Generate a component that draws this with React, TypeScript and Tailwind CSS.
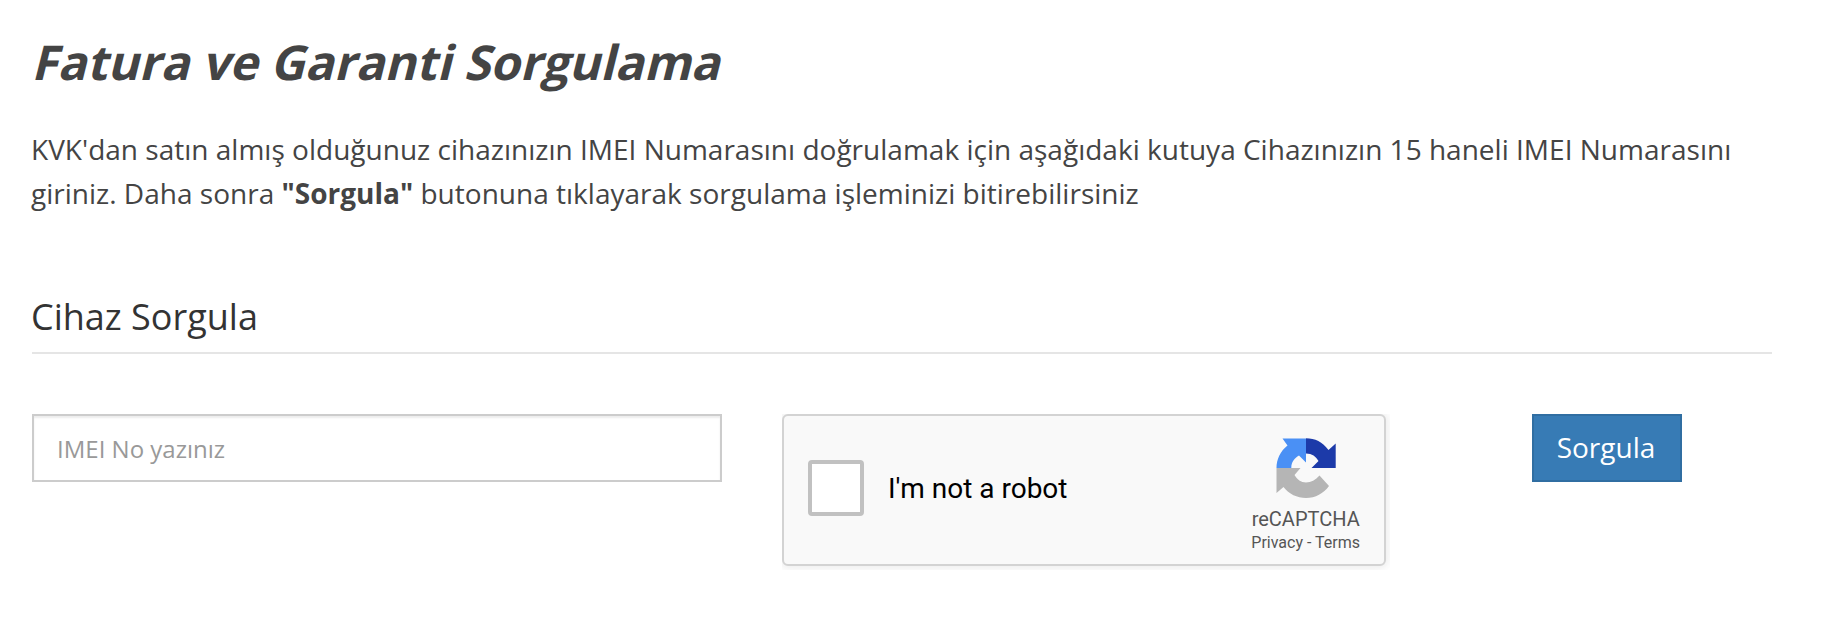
function RecaptchaLogo() {
  return (
    <svg width="60" height="60" viewBox="0 0 60 60" aria-hidden="true">
      <path fill="#1c3aa9" d="M30 0.3C39 0.3 46.5 4 52.500 12L59.7 5.5V30H35.5L42.5 23C40 18.5 36 15.5 30 15.5Z" />
      <path fill="#4a90f5" d="M6.5 0.5H30V24.5L23 17.5C18.5 20 15.3 24 15.3 30H0.5C0.5 21 4.5 13 11.5 7.5Z" />
      <path fill="#b5b5b5" d="M0.5 30H24.5L18.5 37C21 41.5 25 44.5 30 44.5C35 44.5 39.5 42 43.5 37.5L53 48C47.5 55.5 39.5 60 30 60C21 60 13 56 7.5 49L0.5 55Z" />
    </svg>
  );
}

function Recaptcha() {
  return (
    // the frame cuts the shadow off on the top and left
    <div className="h-[156px] w-[608px] overflow-hidden font-[Roboto,sans-serif]">
      <div className="flex h-[152px] w-[604px] items-start rounded-md border-2 border-[#d3d3d3] bg-[#f9f9f9] px-6 shadow-[0_0_8px_2px_rgba(0,0,0,0.08)]">
        <button
          role="checkbox"
          aria-checked="false"
          aria-label="I'm not a robot"
          className="mt-11 size-14 shrink-0 rounded-[4px] border-4 border-[#c1c1c1] bg-white"
        />
        <span className="mt-14 ml-6 text-[28px] leading-[34px] whitespace-nowrap text-black">I'm not a robot</span>
        <div className="mt-[22px] ml-auto flex flex-col items-center text-[#555]">
          <RecaptchaLogo />
          <span className="mt-[9px] text-[20px] leading-6">reCAPTCHA</span>
          <span className="mt-px text-[16px] leading-[22px] whitespace-nowrap">Privacy - Terms</span>
        </div>
      </div>
    </div>
  );
}

export default function App() {
  return (
    <main className="h-[628px] bg-white pt-8 pr-[66px] pl-8 font-['Open_Sans',sans-serif] text-[#444]">
      <h1 className="-ml-px h-[62px] text-[48px] leading-[60px] font-bold tracking-[-0.04px] whitespace-nowrap">
        <span className="inline-block origin-[0_48px] -skew-x-[14deg]">Fatura ve Garanti Sorgulama</span>
      </h1>
      <p className="mt-[33px] -ml-px text-[28px] leading-[44px] tracking-[0.01px] whitespace-nowrap">
        KVK'dan satın almış olduğunuz cihazınızın IMEI Numarasını doğrulamak için aşağıdaki kutuya Cihazınızın 15 haneli IMEI Numarasını
        <br />
        giriniz. Daha sonra <strong className="font-bold">"Sorgula"</strong> butonuna tıklayarak sorgulama işleminizi bitirebilirsiniz
      </p>
      <h2 className="mt-[77px] h-[62px] border-b-2 border-[#e5e5e5] text-[36px] leading-[50px] text-[#333]">
        <span className="-ml-px">Cihaz Sorgula</span>
      </h2>

      <form className="mt-[60px] flex items-start" onSubmit={(event) => event.preventDefault()}>
        <input
          type="text"
          placeholder="IMEI No yazınız"
          className="h-[68px] w-[690px] border-2 border-[#ccc] bg-white px-[23px] text-[24px] shadow-[inset_0_2px_2px_rgba(0,0,0,0.075)] outline-none placeholder:text-[#999]"
        />
        <div className="ml-[60px]">
          <Recaptcha />
        </div>
        <button type="submit" className="ml-[142px] h-[68px] w-[150px] border-2 border-[#306ea2] bg-[#377bb5] pr-0.5 pb-0.5 text-[28px] text-white">
          Sorgula
        </button>
      </form>
    </main>
  );
}
